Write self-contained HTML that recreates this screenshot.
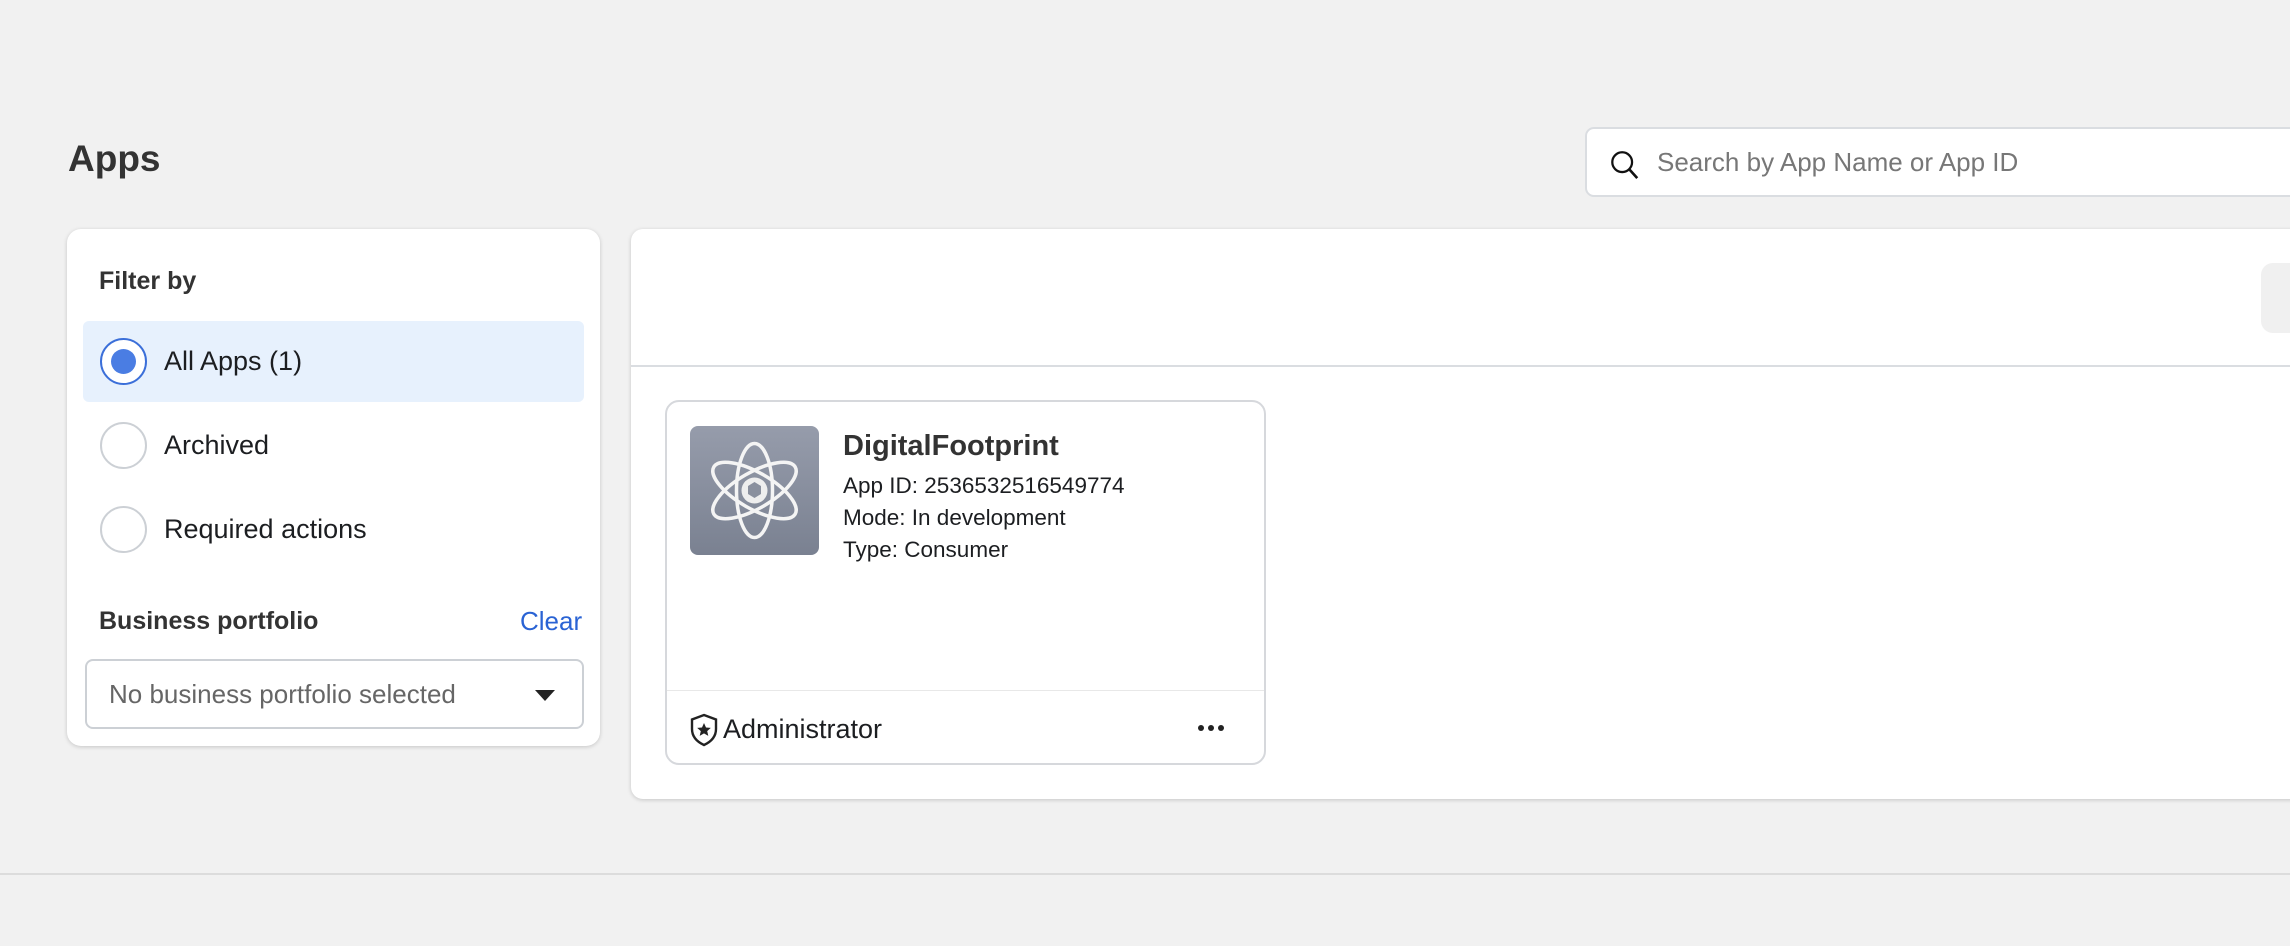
<!DOCTYPE html>
<html><head><style>
*{box-sizing:border-box;margin:0;padding:0}
body{width:2290px;height:946px;background:#f1f1f1;font-family:"Liberation Sans",sans-serif;color:#1c1e21;position:relative;overflow:hidden}
.abs{position:absolute}
.title{left:68px;top:138px;font-size:37px;font-weight:bold;color:#333}
.search{left:1585px;top:127px;width:720px;height:70px;background:#fff;border:2px solid #dadde1;border-radius:9px}
.search span{position:absolute;left:70px;top:18px;font-size:26px;color:#777}
.filter{left:67px;top:229px;width:533px;height:517px;background:#fff;border-radius:14px;box-shadow:0 1px 4px rgba(0,0,0,.18)}
.main{left:631px;top:229px;width:1700px;height:570px;background:#fff;border-radius:12px;box-shadow:0 1px 4px rgba(0,0,0,.18)}
.radio{position:absolute;width:47px;height:47px;border-radius:50%;border:2px solid #ccd0d5;background:#fff}
.lbl{position:absolute;font-size:27px;color:#1c1e21}
.card{left:665px;top:400px;width:601px;height:365px;background:#fff;border:2px solid #d6d8dc;border-radius:14px}
</style></head><body>
<div class="abs title">Apps</div>
<div class="abs search">
<svg class="abs" style="left:22px;top:20px" width="32" height="32" viewBox="0 0 34 34"><circle cx="14" cy="14" r="10.5" fill="none" stroke="#111" stroke-width="2.4"/><line x1="21.5" y1="21.5" x2="30" y2="31" stroke="#111" stroke-width="2.8"/></svg>
<span>Search by App Name or App ID</span></div>

<div class="abs filter">
<div class="abs" style="left:32px;top:38px;font-size:25px;font-weight:bold;color:#333">Filter by</div>
<div class="abs" style="left:16px;top:92px;width:501px;height:81px;background:#e7f1fd;border-radius:6px"></div>
<div class="radio" style="left:33px;top:109px;border-color:#3b6fd9;border-width:2px"><div style="position:absolute;left:9px;top:9px;width:25px;height:25px;border-radius:50%;background:#4a7de3"></div></div>
<div class="lbl" style="left:97px;top:117px">All Apps (1)</div>
<div class="radio" style="left:33px;top:193px"></div>
<div class="lbl" style="left:97px;top:201px">Archived</div>
<div class="radio" style="left:33px;top:277px"></div>
<div class="lbl" style="left:97px;top:285px">Required actions</div>
<div class="abs" style="left:32px;top:378px;font-size:25px;font-weight:bold;color:#333">Business portfolio</div>
<div class="abs" style="left:453px;top:377px;font-size:26px;color:#2a63d4">Clear</div>
<div class="abs" style="left:18px;top:430px;width:499px;height:70px;border:2px solid #ccd0d5;border-radius:8px">
<span style="position:absolute;left:22px;top:18px;font-size:26px;color:#666">No business portfolio selected</span>
<div style="position:absolute;left:448px;top:29px;width:0;height:0;border-left:10px solid transparent;border-right:10px solid transparent;border-top:11px solid #222"></div>
</div></div>

<div class="abs main">
<div class="abs" style="left:0;top:136px;width:100%;height:2px;background:#dadde1"></div>
<div class="abs" style="left:1630px;top:34px;width:100px;height:70px;background:#f0f0f0;border-radius:12px"></div>
</div>

<div class="abs card">
<div class="abs" style="left:23px;top:24px;width:129px;height:129px;border-radius:8px;background:linear-gradient(#969cab,#7a8191)">
<svg width="129" height="129" viewBox="0 0 129 129" fill="none" stroke="#f4f4f4" stroke-width="3.5">
<ellipse cx="64.5" cy="64.5" rx="18" ry="47"/>
<ellipse cx="64.5" cy="64.5" rx="18" ry="47" transform="rotate(60 64.5 64.5)"/>
<ellipse cx="64.5" cy="64.5" rx="18" ry="47" transform="rotate(-60 64.5 64.5)"/>
<circle cx="64.5" cy="64.5" r="13" fill="#eee" stroke="none"/>
<path d="M58 60l6.5-4 6.5 4v8l-6.5 4-6.5-4z" fill="#8a909e" stroke="none"/>
</svg></div>
<div class="abs" style="left:176px;top:28px;font-size:29px;font-weight:bold;color:#333">DigitalFootprint</div>
<div class="abs" style="left:176px;top:68px;font-size:22.5px;line-height:32px;color:#1c1e21">App ID: 2536532516549774<br>Mode: In development<br>Type: Consumer</div>
<div class="abs" style="left:0;top:288px;width:100%;height:1px;background:#e8e8e8"></div>
<svg class="abs" style="left:22px;top:311px" width="30" height="34" viewBox="0 0 30 34"><path d="M15 2L27 6.5V16c0 8-5.5 13-12 16C8.5 29 3 24 3 16V6.5z" fill="none" stroke="#222" stroke-width="2.4"/><path d="M15 10l2 4.5 4.8.4-3.6 3.2 1.1 4.8L15 20.4l-4.3 2.5 1.1-4.8-3.6-3.2 4.8-.4z" fill="#222"/></svg>
<div class="abs" style="left:56px;top:312px;font-size:27px;color:#1c1e21">Administrator</div>
<div class="abs" style="left:531px;top:323px;font-size:0">
<span style="display:inline-block;width:6px;height:6px;border-radius:50%;background:#222;margin-right:4px"></span><span style="display:inline-block;width:6px;height:6px;border-radius:50%;background:#222;margin-right:4px"></span><span style="display:inline-block;width:6px;height:6px;border-radius:50%;background:#222"></span></div>
</div>

<div class="abs" style="left:0;top:873px;width:2290px;height:2px;background:#dcdcdc"></div>
</body></html>
